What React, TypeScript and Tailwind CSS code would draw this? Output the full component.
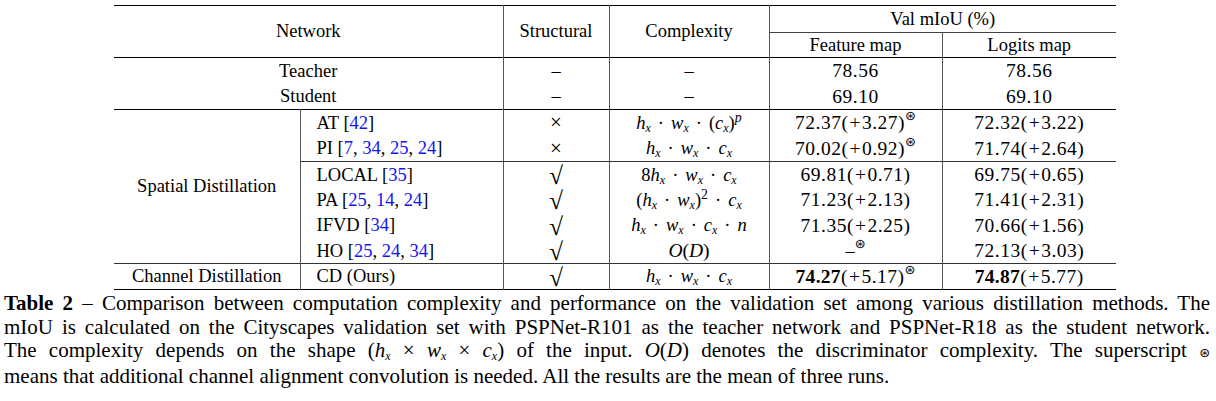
import React from 'react'

const Cite = ({ refs }: { refs: string[] }) => (
  <>
    [
    {refs.map((r, i) => (
      <React.Fragment key={r + i}>
        <span className="text-[#1414f0]">{r}</span>
        {i < refs.length - 1 ? ', ' : ''}
      </React.Fragment>
    ))}
    ]
  </>
)

const V = ({ v }: { v: string }) => (
  <>
    <i>{v}</i>
    <sub className="italic text-[12px]">x</sub>
  </>
)

const Dot = () => <span className="mx-[7px]">·</span>

const Star = () => (
  <sup className="text-[13px] font-['DejaVu_Sans',sans-serif] top-[-9px]">⊛</sup>
)

// numbers as "72.37(+3.27)"
const Num = ({ v, d, bold }: { v: string; d: string; bold?: boolean }) => (
  <span className="text-[19.5px] tracking-[0.5px]">
    {bold ? <b className="tracking-[0.3px]">{v}</b> : v}(<span className="mx-[1px]">+</span>
    {d})
  </span>
)

const Check = () => (
  <span className="inline-block text-[25px] leading-[20px] relative top-[2px]">√</span>
)
const Cross = () => <span className="text-[21px] leading-none">×</span>

const cx = 'px-0 py-0 text-center align-middle leading-none'
const vline = 'border-r border-r-[#555]'

type Row = {
  name: React.ReactNode
  structural: React.ReactNode
  complexity: React.ReactNode
  feature: React.ReactNode
  logits: React.ReactNode
  h: string
  last?: boolean
}

const spatial: Row[] = [
  {
    name: <>AT <Cite refs={['42']} /></>,
    structural: <Cross />,
    complexity: (
      <>
        <V v="h" />
        <Dot />
        <V v="w" />
        <Dot />(<V v="c" />)<sup className="italic">p</sup>
      </>
    ),
    feature: <><Num v="72.37" d="3.27" /><Star /></>,
    logits: <Num v="72.32" d="3.22" />,
    h: 'h-[26px]',
  },
  {
    name: <>PI <Cite refs={['7', '34', '25', '24']} /></>,
    structural: <Cross />,
    complexity: (
      <>
        <V v="h" />
        <Dot />
        <V v="w" />
        <Dot />
        <V v="c" />
      </>
    ),
    feature: <><Num v="70.02" d="0.92" /><Star /></>,
    logits: <Num v="71.74" d="2.64" />,
    h: 'h-[26px]',
    last: true,
  },
  {
    name: <>LOCAL <Cite refs={['35']} /></>,
    structural: <Check />,
    complexity: (
      <>
        8<V v="h" />
        <Dot />
        <V v="w" />
        <Dot />
        <V v="c" />
      </>
    ),
    feature: <Num v="69.81" d="0.71" />,
    logits: <Num v="69.75" d="0.65" />,
    h: 'h-[26px]',
  },
  {
    name: <>PA <Cite refs={['25', '14', '24']} /></>,
    structural: <Check />,
    complexity: (
      <>
        (<V v="h" />
        <Dot />
        <V v="w" />)<sup>2</sup>
        <Dot />
        <V v="c" />
      </>
    ),
    feature: <Num v="71.23" d="2.13" />,
    logits: <Num v="71.41" d="2.31" />,
    h: 'h-[25px]',
  },
  {
    name: <>IFVD <Cite refs={['34']} /></>,
    structural: <Check />,
    complexity: (
      <>
        <V v="h" />
        <Dot />
        <V v="w" />
        <Dot />
        <V v="c" />
        <Dot />
        <i>n</i>
      </>
    ),
    feature: <Num v="71.35" d="2.25" />,
    logits: <Num v="70.66" d="1.56" />,
    h: 'h-[26px]',
  },
  {
    name: <>HO <Cite refs={['25', '24', '34']} /></>,
    structural: <Check />,
    complexity: (
      <span className="text-[19.5px]">
        <i>O</i>(<i>D</i>)
      </span>
    ),
    feature: <>–<Star /></>,
    logits: <Num v="72.13" d="3.03" />,
    h: 'h-[25px]',
  },
]

const App = () => {
  return (
    <div className="w-[1216px] h-[401px] bg-white text-black font-['Liberation_Serif',serif] overflow-hidden">
      <div className="pt-[5px] pl-[114px]">
        <table className="table-fixed border-collapse border-y border-black text-[18.5px]">
          <colgroup>
            <col className="w-[186px]" />
            <col className="w-[203px]" />
            <col className="w-[106px]" />
            <col className="w-[160px]" />
            <col className="w-[173px]" />
            <col className="w-[174px]" />
          </colgroup>
          <thead>
            <tr className="h-[27px]">
              <td colSpan={2} rowSpan={2} className={`${cx} ${vline}`}>Network</td>
              <td rowSpan={2} className={`${cx} ${vline}`}>Structural</td>
              <td rowSpan={2} className={`${cx} ${vline}`}>Complexity</td>
              <td colSpan={2} className={`${cx} border-b border-b-[#444]`}>Val mIoU (%)</td>
            </tr>
            <tr className="h-[25px]">
              <td className={`${cx} ${vline}`}>Feature map</td>
              <td className={cx}>Logits map</td>
            </tr>
          </thead>
          <tbody>
            <tr className="h-[26px] border-t border-black">
              <td colSpan={2} className={`${cx} ${vline}`}>Teacher</td>
              <td className={`${cx} ${vline}`}>–</td>
              <td className={`${cx} ${vline}`}>–</td>
              <td className={`${cx} ${vline} text-[19.5px] tracking-[0.5px]`}>78.56</td>
              <td className={`${cx} text-[19.5px] tracking-[0.5px]`}>78.56</td>
            </tr>
            <tr className="h-[26px]">
              <td colSpan={2} className={`${cx} ${vline}`}>Student</td>
              <td className={`${cx} ${vline}`}>–</td>
              <td className={`${cx} ${vline}`}>–</td>
              <td className={`${cx} ${vline} text-[19.5px] tracking-[0.5px]`}>69.10</td>
              <td className={`${cx} text-[19.5px] tracking-[0.5px]`}>69.10</td>
            </tr>
            {spatial.map((r, i) => {
              const b = r.last ? 'border-b border-b-[#333]' : ''
              return (
                <tr key={i} className={`${r.h} ${i === 0 ? 'border-t border-black' : ''}`}>
                  {i === 0 && (
                    <td rowSpan={6} className={`${cx} ${vline}`}>Spatial Distillation</td>
                  )}
                  <td className={`${cx} !text-left pl-[16px] ${vline} ${b}`}>{r.name}</td>
                  <td className={`${cx} ${vline} ${b}`}>{r.structural}</td>
                  <td className={`${cx} ${vline} ${b}`}>{r.complexity}</td>
                  <td className={`${cx} ${vline} ${b}`}>{r.feature}</td>
                  <td className={`${cx} ${b}`}>{r.logits}</td>
                </tr>
              )
            })}
            <tr className="h-[26px] border-t border-[#333]">
              <td className={`${cx} ${vline}`}>Channel Distillation</td>
              <td className={`${cx} !text-left pl-[16px] ${vline}`}>CD (Ours)</td>
              <td className={`${cx} ${vline}`}>
                <Check />
              </td>
              <td className={`${cx} ${vline}`}>
                <V v="h" />
                <Dot />
                <V v="w" />
                <Dot />
                <V v="c" />
              </td>
              <td className={`${cx} ${vline}`}>
                <Num v="74.27" d="5.17" bold />
                <Star />
              </td>
              <td className={cx}>
                <Num v="74.87" d="5.77" bold />
              </td>
            </tr>
          </tbody>
        </table>
      </div>
      <div className="ml-[4px] mt-[2px] w-[1206px] text-[21px] leading-[23.7px]">
        <div className="text-justify [text-align-last:justify]">
          <b>Table 2</b> – Comparison between computation complexity and performance on the validation set among various distillation methods. The
        </div>
        <div className="text-justify [text-align-last:justify]">
          mIoU is calculated on the Cityscapes validation set with PSPNet-R101 as the teacher network and PSPNet-R18 as the student network.
        </div>
        <div className="text-justify [text-align-last:justify]">
          The complexity depends on the shape (<V v="h" /> × <V v="w" /> × <V v="c" />) of the input. <i>O</i>(<i>D</i>) denotes the discriminator complexity. The superscript{' '}
          <span className="text-[13px] font-['DejaVu_Sans',sans-serif]">⊛</span>
        </div>
        <div>means that additional channel alignment convolution is needed. All the results are the mean of three runs.</div>
      </div>
    </div>
  )
}

export default App
